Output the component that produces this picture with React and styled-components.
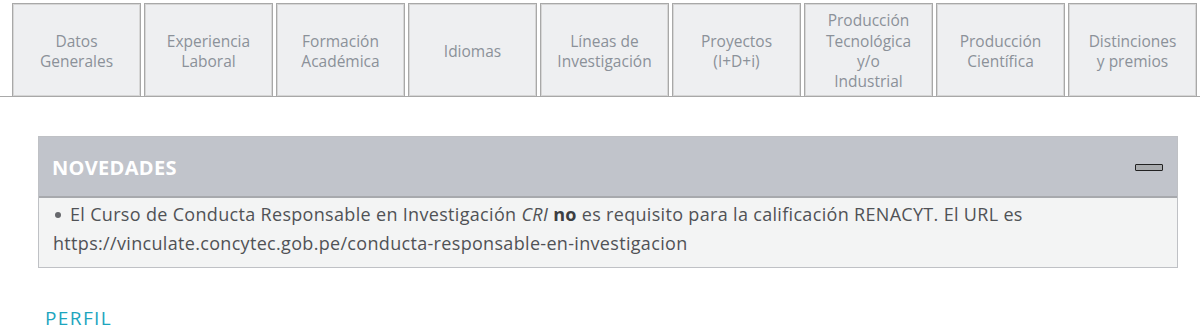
import React from "react";
import styled, { createGlobalStyle } from "styled-components";

const GlobalStyle = createGlobalStyle`
  body {
    margin: 0;
    background: #ffffff;
    font-family: "Open Sans", "Noto Sans", sans-serif;
  }
`;

const tabs = [
  ["Datos", "Generales"],
  ["Experiencia", "Laboral"],
  ["Formación", "Académica"],
  ["Idiomas"],
  ["Líneas de", "Investigación"],
  ["Proyectos", "(I+D+i)"],
  ["Producción", "Tecnológica", "y/o", "Industrial"],
  ["Producción", "Científica"],
  ["Distinciones", "y premios"],
];

export default function App() {
  return (
    <>
      <GlobalStyle />
      <Page>
        <TabBar>
          {tabs.map((lines, i) => (
            <Tab key={i}>
              {lines.map((l, j) => (
                <span key={j}>{l}</span>
              ))}
            </Tab>
          ))}
        </TabBar>

        <Panel>
          <PanelHeader>
            <h3>NOVEDADES</h3>
            <Collapse aria-label="minimizar" />
          </PanelHeader>
          <PanelBody>
            <Bullet /> El Curso de Conducta Responsable en Investigación <em>CRI</em>{" "}
            <b>no</b> es requisito para la calificación RENACYT. El URL es
            <br />
            https://vinculate.concytec.gob.pe/conducta-responsable-en-investigacion
          </PanelBody>
        </Panel>

        <SectionTitle>PERFIL</SectionTitle>
      </Page>
    </>
  );
}

const Page = styled.div`
  width: 1200px;
  height: 331px;
  overflow: hidden;
  padding-top: 3px;
  box-sizing: border-box;
`;

const TabBar = styled.div`
  display: flex;
  gap: 3px;
  padding: 0 3px 0 12px;
  border-bottom: 1px solid #a9a9a9;
`;

const Tab = styled.div`
  width: 129px;
  height: 94px;
  box-sizing: border-box;
  padding-top: 2px;
  background: #eeeff1;
  border: 1px solid #a8a8a8;
  box-shadow: inset 1px 1px 0 #d6d6d6, inset -1px -1px 0 #d6d6d6;
  display: flex;
  flex-direction: column;
  align-items: center;
  justify-content: center;
  color: #8b9199;
  font-size: 15.5px;
  line-height: 20.3px;
  text-align: center;
  margin-bottom: -1px;
`;

const Panel = styled.div`
  margin: 39px 22px 0 38px;
  border: 1px solid #bfc1c5;
`;

const PanelHeader = styled.div`
  height: 59px;
  background: #c1c4cb;
  border-bottom: 2px solid #a7a9ad;
  display: flex;
  align-items: center;
  justify-content: space-between;
  padding: 0 14px 0 13px;

  h3 {
    margin: 0;
    padding-top: 1px;
    color: #ffffff;
    font-size: 20px;
    letter-spacing: 0.3px;
    font-weight: 700;
  }
`;

const Collapse = styled.button`
  width: 28px;
  height: 7px;
  padding: 0;
  margin-top: 2px;
  border: 1.5px solid #222;
  border-radius: 1px;
  background: #a9abae;
`;

const PanelBody = styled.div`
  background: #f3f4f4;
  padding: 2px 14px 9px 14px;
  color: #505256;
  font-size: 18px;
  letter-spacing: 0.32px;
  line-height: 29px;

  b {
    color: #3c3e42;
  }
`;

const Bullet = styled.span`
  display: inline-block;
  width: 6px;
  height: 6px;
  margin: 0 4px 3px 2px;
  border-radius: 50%;
  background: #66686c;
`;

const SectionTitle = styled.div`
  margin: 37px 0 0 45px;
  color: #1da5be;
  font-size: 19px;
  letter-spacing: 1.4px;
`;
